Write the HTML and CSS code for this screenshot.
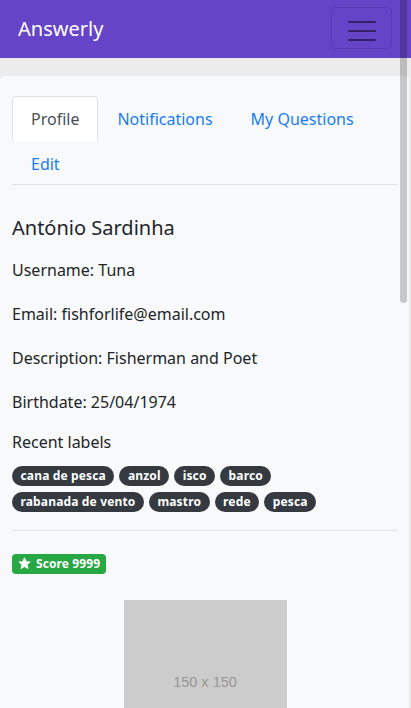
FILE: index.html
```html
<!DOCTYPE html>
<html lang="en">
<head>
<meta charset="utf-8">
<title>Answerly - Profile</title>
<link rel="stylesheet" href="styles.css">
</head>
<body>
<nav class="navbar">
  <a class="brand" href="#">Answerly</a>
  <button class="toggler" type="button" aria-label="Toggle navigation">
    <svg width="30" height="30" viewBox="0 0 30 30" aria-hidden="true">
      <path d="M2 9h26M2 18h26M2 27h26" stroke="rgba(0,0,0,0.5)" stroke-width="2" stroke-linecap="round"/>
    </svg>
  </button>
</nav>
<main class="page">
  <section class="card">
    <ul class="tabs">
      <li><a class="tab active" href="#">Profile</a></li>
      <li><a class="tab" href="#">Notifications</a></li>
      <li><a class="tab" href="#">My Questions</a></li>
      <li><a class="tab" href="#">Edit</a></li>
    </ul>
    <div class="profile">
      <h5 class="name">António Sardinha</h5>
      <p class="info">Username: Tuna</p>
      <p class="info">Email: fishforlife@email.com</p>
      <p class="info">Description: Fisherman and Poet</p>
      <p class="info last">Birthdate: 25/04/1974</p>
      <p class="labels-title">Recent labels</p>
      <div class="labels">
        <span class="pill">cana de pesca</span>
        <span class="pill">anzol</span>
        <span class="pill">isco</span>
        <span class="pill">barco</span>
        <span class="pill">rabanada de vento</span>
        <span class="pill">mastro</span>
        <span class="pill">rede</span>
        <span class="pill">pesca</span>
      </div>
      <hr class="divider">
      <span class="score">
        <svg class="star" width="13" height="13" viewBox="0 0 24 24" aria-hidden="true">
          <path d="M12 1.2l3.2 6.9 7.4.9-5.5 5.1 1.5 7.4L12 17.8l-6.6 3.7 1.5-7.4L1.4 9l7.4-.9z" fill="#fff" stroke="#fff" stroke-width="1.2" stroke-linejoin="round"/>
        </svg>
        Score 9999
      </span>
      <div class="avatar-wrap">
        <div class="avatar"><span>150 x 150</span></div>
      </div>
    </div>
  </section>
</main>
<div class="scroll-thumb" aria-hidden="true"></div>
</body>
</html>
```

FILE: styles.css
```css
html {
  scrollbar-width: none;
}
html::-webkit-scrollbar {
  display: none;
}
body {
  margin: 0;
  font-family: "Noto Sans", "Open Sans", sans-serif;
  font-size: 16px;
  line-height: 24px;
  color: #212529;
  background: #ececec;
}
.navbar {
  height: 58px;
  box-sizing: border-box;
  background: #6644c8;
  display: flex;
  align-items: center;
  justify-content: space-between;
  padding: 0 19px 0 18px;
}
.brand {
  color: #fff;
  text-decoration: none;
  font-size: 20px;
  line-height: 30px;
}
.toggler {
  width: 61px;
  height: 42px;
  margin-top: -2px;
  background: transparent;
  border: 1px solid rgba(0, 0, 0, 0.12);
  border-radius: 5px;
  display: flex;
  align-items: center;
  justify-content: center;
  padding: 0;
}
.page {
  padding-top: 17px;
}
.card {
  background: #f8f9fa;
  margin-right: 1px;
  border: 1px solid rgba(0, 0, 0, 0.05);
  border-left: 0;
  border-radius: 5px 5px 0 0;
  padding: 20px 11px 40px 12px;
}
.tabs {
  list-style: none;
  margin: 0;
  padding: 0;
  display: flex;
  flex-wrap: wrap;
  border-bottom: 1px solid #dee2e6;
}
.tabs li {
  margin-bottom: -1px;
}
.tab {
  display: block;
  padding: 10px 18px 9px;
  border: 1px solid transparent;
  border-top-left-radius: 4px;
  border-top-right-radius: 4px;
  color: #1a7cf5;
  text-decoration: none;
}
.tabs li:last-child .tab {
  padding-top: 11px;
  padding-bottom: 8px;
}
.tab.active {
  color: #495057;
  background: #fff;
  border-color: #dee2e6 #dee2e6 #fff;
}
.name {
  margin: 31px 0 18px;
  font-size: 20px;
  font-weight: 400;
  line-height: 24px;
}
.info {
  margin: 0 0 20px;
}
.info.last {
  margin-bottom: 16px;
}
.labels-title {
  margin: 0 0 12px;
}
.labels {
  display: flex;
  flex-wrap: wrap;
  gap: 6px 5px;
}
.pill {
  background: #343a40;
  color: #fff;
  font-size: 12px;
  font-weight: 700;
  line-height: 20px;
  letter-spacing: 0.15px;
  padding: 0 8.5px;
  border-radius: 10px;
}
.divider {
  border: 0;
  border-top: 1px solid #dee2e6;
  margin: 18px 0 21px;
}
.score {
  display: inline-flex;
  align-items: center;
  gap: 5px;
  background: #28a745;
  color: #fff;
  font-size: 12px;
  font-weight: 700;
  line-height: 20px;
  letter-spacing: 0.1px;
  padding: 0 6px 0 6px;
  border-radius: 4px;
}
.avatar-wrap {
  display: flex;
  justify-content: center;
  margin-top: 24px;
}
.avatar {
  width: 163px;
  height: 163px;
  background: #cccccc;
  display: flex;
  align-items: center;
  justify-content: center;
  color: #969696;
  font-family: "Liberation Sans", Arial, sans-serif;
  font-size: 14.5px;
}
.scroll-thumb {
  position: fixed;
  top: 0;
  left: 400px;
  width: 7px;
  height: 303px;
  background: rgba(0, 0, 0, 0.2);
  border-radius: 0 0 4px 4px;
}
```
